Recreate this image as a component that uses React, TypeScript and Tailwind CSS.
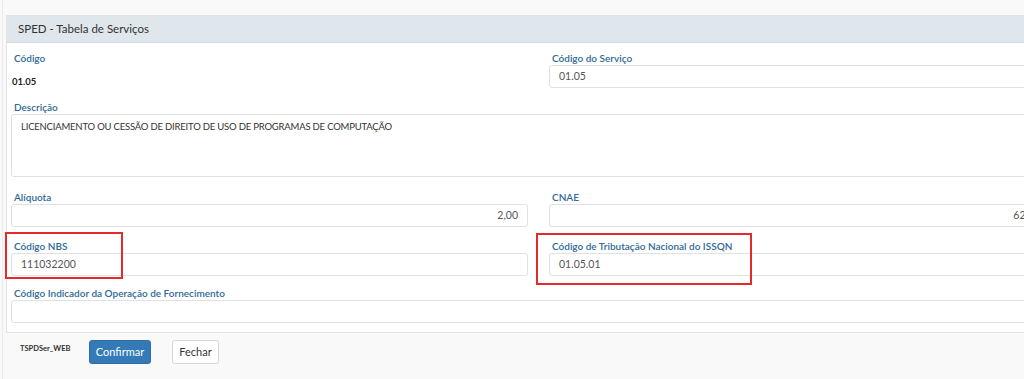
import React from "react";

const Label = ({ children }: { children: React.ReactNode }) => (
  <div className="h-[14px] pl-[3px] text-[10px] leading-[14px] font-semibold text-[#2f6a98] whitespace-nowrap">
    {children}
  </div>
);

const Input = ({ value, right }: { value?: string; right?: boolean }) => (
  <div
    className={`h-[23px] border border-[#e1e1e1] rounded-[3px] bg-white flex items-center px-[9px] text-[10.5px] text-[#555] ${
      right ? "justify-end" : ""
    }`}
  >
    {value}
  </div>
);

export default function App() {
  return (
    <div className="relative w-[1024px] h-[379px] overflow-hidden bg-[#f9f9f9] font-['Lato',sans-serif]">
      <div className="absolute left-[2px] top-0 bottom-0 w-px bg-[#ececec]" />
      <div className="pt-[15px] pl-[6px]">
        <div className="w-[1065px] border border-[#e3e3e3] bg-white">
          <div className="h-[27px] bg-[#dfe6ec] border-b border-[#c9dbe9] flex items-center pl-[11px] text-[11.5px] text-[#333]">
            SPED - Tabela de Serviços
          </div>
          <div className="px-[4px] pt-[8px] pb-[9px]">
            <div className="grid grid-cols-[517px_517px] gap-x-[21px]">
              <div>
                <Label>Código</Label>
                <div className="h-[23px] pt-[11px] pl-[1px] text-[9.5px] leading-[12px] font-bold text-[#222]">01.05</div>
              </div>
              <div>
                <Label>Código do Serviço</Label>
                <Input value="01.05" />
              </div>
            </div>
            <div className="mt-[12px]">
              <Label>Descrição</Label>
              <div className="h-[63px] border border-[#e1e1e1] rounded-[3px] bg-white px-[9px] pt-[5px] text-[9.5px] tracking-[-0.2px] text-[#333]">
                LICENCIAMENTO OU CESSÃO DE DIREITO DE USO DE PROGRAMAS DE COMPUTAÇÃO
              </div>
            </div>
            <div className="mt-[13px] grid grid-cols-[517px_517px] gap-x-[21px]">
              <div>
                <Label>Alíquota</Label>
                <Input value="2,00" right />
              </div>
              <div>
                <Label>CNAE</Label>
                <Input value="6203100" right />
              </div>
            </div>
            <div className="mt-[12px] grid grid-cols-[517px_517px] gap-x-[21px]">
              <div>
                <Label>Código NBS</Label>
                <Input value="111032200" />
              </div>
              <div>
                <Label>Código de Tributação Nacional do ISSQN</Label>
                <Input value="01.05.01" />
              </div>
            </div>
            <div className="mt-[10px]">
              <Label>Código Indicador da Operação de Fornecimento</Label>
              <Input />
            </div>
          </div>
        </div>
        <div className="flex items-start pt-[7px] pl-[14px]">
          <div className="pt-[3px] text-[7.5px] font-bold text-[#333] w-[69px]">TSPDSer_WEB</div>
          <button className="h-[24px] w-[62px] rounded-[3px] bg-[#337ab7] border border-[#2e6da4] text-white text-[11px]">
            Confirmar
          </button>
          <button className="ml-[21px] h-[24px] w-[47px] rounded-[3px] bg-white border border-[#d6d6d6] text-[#333] text-[11px]">
            Fechar
          </button>
        </div>
      </div>
      <div className="absolute left-[5px] top-[232px] w-[118px] h-[47px] border-2 border-[#e32b2b]" />
      <div className="absolute left-[536px] top-[233px] w-[216px] h-[52px] border-2 border-[#e32b2b]" />
    </div>
  );
}
